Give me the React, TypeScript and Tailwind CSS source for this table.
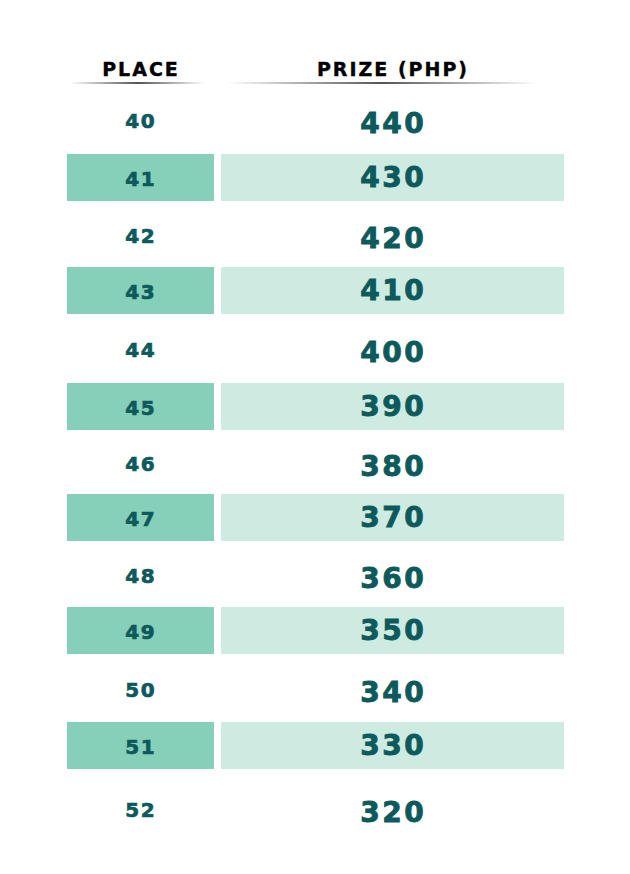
import React from "react";

interface PrizeRow {
  place: number;
  prize: number;
  shaded: boolean;
  height: string;
}

const rows: PrizeRow[] = [
  { place: 40, prize: 440, shaded: false, height: "h-[70px]" },
  { place: 41, prize: 430, shaded: true, height: "h-[47px]" },
  { place: 42, prize: 420, shaded: false, height: "h-[66px]" },
  { place: 43, prize: 410, shaded: true, height: "h-[47px]" },
  { place: 44, prize: 400, shaded: false, height: "h-[69px]" },
  { place: 45, prize: 390, shaded: true, height: "h-[47px]" },
  { place: 46, prize: 380, shaded: false, height: "h-[64px]" },
  { place: 47, prize: 370, shaded: true, height: "h-[47px]" },
  { place: 48, prize: 360, shaded: false, height: "h-[66px]" },
  { place: 49, prize: 350, shaded: true, height: "h-[47px]" },
  { place: 50, prize: 340, shaded: false, height: "h-[68px]" },
  { place: 51, prize: 330, shaded: true, height: "h-[47px]" },
  { place: 52, prize: 320, shaded: false, height: "h-[78px]" },
];

export default function App() {
  return (
    <div
      className="w-[630px] h-[874px] bg-white"
      style={{ fontFamily: "'DejaVu Sans', Inter, sans-serif" }}
    >
      <div className="w-[497px] mx-auto pt-[57px]">
        {/* Header */}
        <div className="flex gap-[7px]">
          <div className="w-[147px] flex flex-col items-center">
            <span className="text-[19px] leading-[24px] font-bold tracking-[2px] text-black pl-[2px] [-webkit-text-stroke:0.4px_#000]">
              PLACE
            </span>
            <div className="mt-[1px] ml-[-6px] w-[135px] h-[2px] bg-gradient-to-r from-transparent via-[#555] to-transparent" />
          </div>
          <div className="w-[343px] flex flex-col items-center">
            <span className="text-[19px] leading-[24px] font-bold tracking-[2px] text-black pl-[2px] [-webkit-text-stroke:0.4px_#000]">
              PRIZE (PHP)
            </span>
            <div className="mt-[1px] ml-[-20px] w-[310px] h-[2px] bg-gradient-to-r from-transparent via-[#555] to-transparent" />
          </div>
        </div>

        {/* Rows */}
        {rows.map((row) => (
          <div key={row.place} className={`flex gap-[7px] ${row.height}`}>
            <div
              className={`w-[147px] flex items-center justify-center ${
                row.shaded ? "bg-[#86cfb8]" : ""
              }`}
            >
              <span className="text-[20px] leading-none font-bold tracking-[1.5px] pl-[1.5px] text-[#0d5a5d] pt-[3px] [-webkit-text-stroke:0.7px_#0d5a5d]">
                {row.place}
              </span>
            </div>
            <div
              className={`w-[343px] flex items-center justify-center ${
                row.shaded ? "bg-[#cdebe1]" : ""
              }`}
            >
              <span
                className={`text-[28px] leading-none font-bold tracking-[2.5px] pl-[2.5px] text-[#0d5a5d] [-webkit-text-stroke:0.9px_#0d5a5d] ${
                  row.shaded ? "pt-[1px]" : "pt-[9px]"
                }`}
              >
                {row.prize}
              </span>
            </div>
          </div>
        ))}
      </div>
    </div>
  );
}
